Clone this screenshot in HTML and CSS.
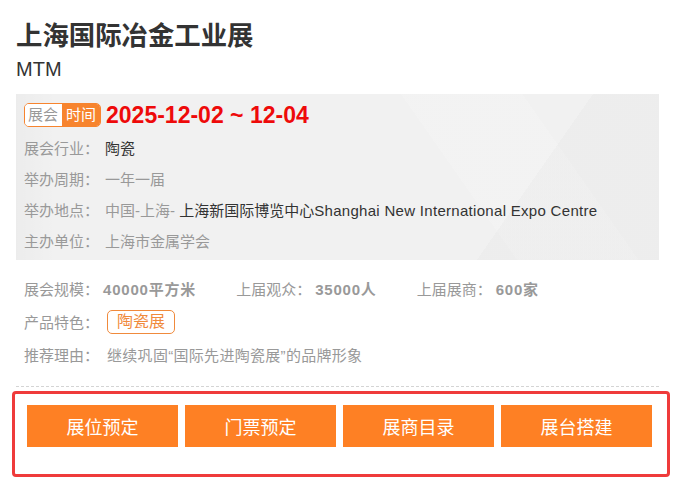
FILE: index.html
```html
<!DOCTYPE html>
<html lang="zh-CN">
<head>
<meta charset="utf-8">
<title>上海国际冶金工业展</title>
<link rel="stylesheet" href="styles.css">
</head>
<body>
<div class="page">
  <h1 class="title">上海国际冶金工业展</h1>
  <div class="subtitle">MTM</div>

  <div class="info-box">
    <div class="date-row">
      <span class="badge"><span class="badge-a">展会</span><span class="badge-b">时间</span></span>
      <span class="date">2025-12-02 ~ 12-04</span>
    </div>
    <div class="row"><span class="label">展会行业：</span><span class="val dark">陶瓷</span></div>
    <div class="row"><span class="label">举办周期：</span><span class="val">一年一届</span></div>
    <div class="row"><span class="label">举办地点：</span><span class="val">中国-上海-&nbsp;<span class="dark">上海新国际博览中心<span class="en">Shanghai New International Expo Centre</span></span></span></div>
    <div class="row"><span class="label">主办单位：</span><span class="val">上海市金属学会</span></div>
  </div>

  <div class="extra">
    <div class="row2">
      <span class="stat"><span class="label">展会规模：</span><b class="num">40000平方米</b></span>
      <span class="stat"><span class="label">上届观众：</span><b class="num">35000人</b></span>
      <span class="stat"><span class="label">上届展商：</span><b class="num">600家</b></span>
    </div>
    <div class="row2"><span class="label">产品特色：</span><span class="tag">陶瓷展</span></div>
    <div class="row2"><span class="label">推荐理由：</span><span class="reason">继续巩固“国际先进陶瓷展”的品牌形象</span></div>
  </div>
</div>

<div class="actions">
  <a class="btn">展位预定</a>
  <a class="btn">门票预定</a>
  <a class="btn">展商目录</a>
  <a class="btn">展台搭建</a>
</div>
</body>
</html>
```

FILE: styles.css
```css
* { box-sizing: border-box; }
body {
  margin: 0;
  background: #fff;
  font-family: "Liberation Sans", "Noto Sans CJK SC", Arial, sans-serif;
  color: #333;
}
.page {
  padding: 17px 14px 0 16px;
}
.title {
  margin: 0;
  font-size: 26.4px;
  line-height: 38px;
  font-weight: bold;
  color: #333;
}
.subtitle {
  font-size: 20px;
  line-height: 28px;
  color: #333;
  margin-bottom: 11px;
}
.info-box {
  padding: 9px 8px 4px 8px;
  background-color: #f1f1f1;
  background-image:
    linear-gradient(125deg, rgba(0,0,0,0) 76%, rgba(0,0,0,0.015) 76%),
    linear-gradient(55deg, rgba(255,255,255,0) 66%, rgba(255,255,255,0.12) 66%, rgba(255,255,255,0.12) 82%, rgba(255,255,255,0) 82%),
    linear-gradient(90deg, rgba(0,0,0,0.02) 0, rgba(0,0,0,0) 40px);
}
.date-row {
  display: flex;
  align-items: center;
  height: 24px;
  margin-bottom: 5px;
}
.badge {
  display: inline-flex;
  height: 24px;
  border: 1px solid #f7842e;
  border-radius: 5px;
  overflow: hidden;
  font-size: 15px;
  line-height: 22px;
}
.badge-a {
  background: #fff;
  color: #999;
  padding: 0 4px 0 3px;
}
.badge-b {
  background: #f7842e;
  color: #fff;
  padding: 0 4px;
}
.date {
  margin-left: 5px;
  font-size: 23px;
  font-weight: bold;
  color: #ee0a0a;
  line-height: 24px;
}
.row {
  display: flex;
  align-items: center;
  height: 31px;
  font-size: 15px;
}
.label {
  flex: none;
  width: 81px;
  color: #999;
  font-size: 15px;
}
.val { color: #999; }
.dark { color: #333; }
.en { letter-spacing: 0.3px; }
.extra {
  padding: 12px 0 15px 8px;
  border-bottom: 1px dashed #d4d4d4;
}
.row2 {
  display: flex;
  align-items: center;
  height: 33px;
  font-size: 15px;
}
.stat {
  display: inline-flex;
  align-items: center;
  margin-right: 40px;
}
.stat .label { width: 79px; }
.num {
  color: #999;
  font-weight: bold;
  font-size: 15px;
  letter-spacing: 0.8px;
}
.tag {
  margin-left: 2px;
  display: inline-block;
  height: 24px;
  line-height: 22px;
  padding: 0 9px;
  border: 1px solid #f08a3c;
  border-radius: 5px;
  color: #f08a3c;
  font-size: 16px;
}
.reason {
  margin-left: 2px;
  color: #999;
  letter-spacing: 0.3px;
}
.actions {
  margin: 4px 3px 0 12px;
  border: 3px solid #ef3b3b;
  border-radius: 4px;
  padding: 11px 12px 27px 12px;
  display: grid;
  grid-template-columns: repeat(4, 151px);
  column-gap: 7px;
}
.btn {
  display: flex;
  align-items: center;
  justify-content: center;
  height: 42px;
  background: #fe8024;
  color: #fff;
  font-size: 18px;
  text-decoration: none;
}
```
